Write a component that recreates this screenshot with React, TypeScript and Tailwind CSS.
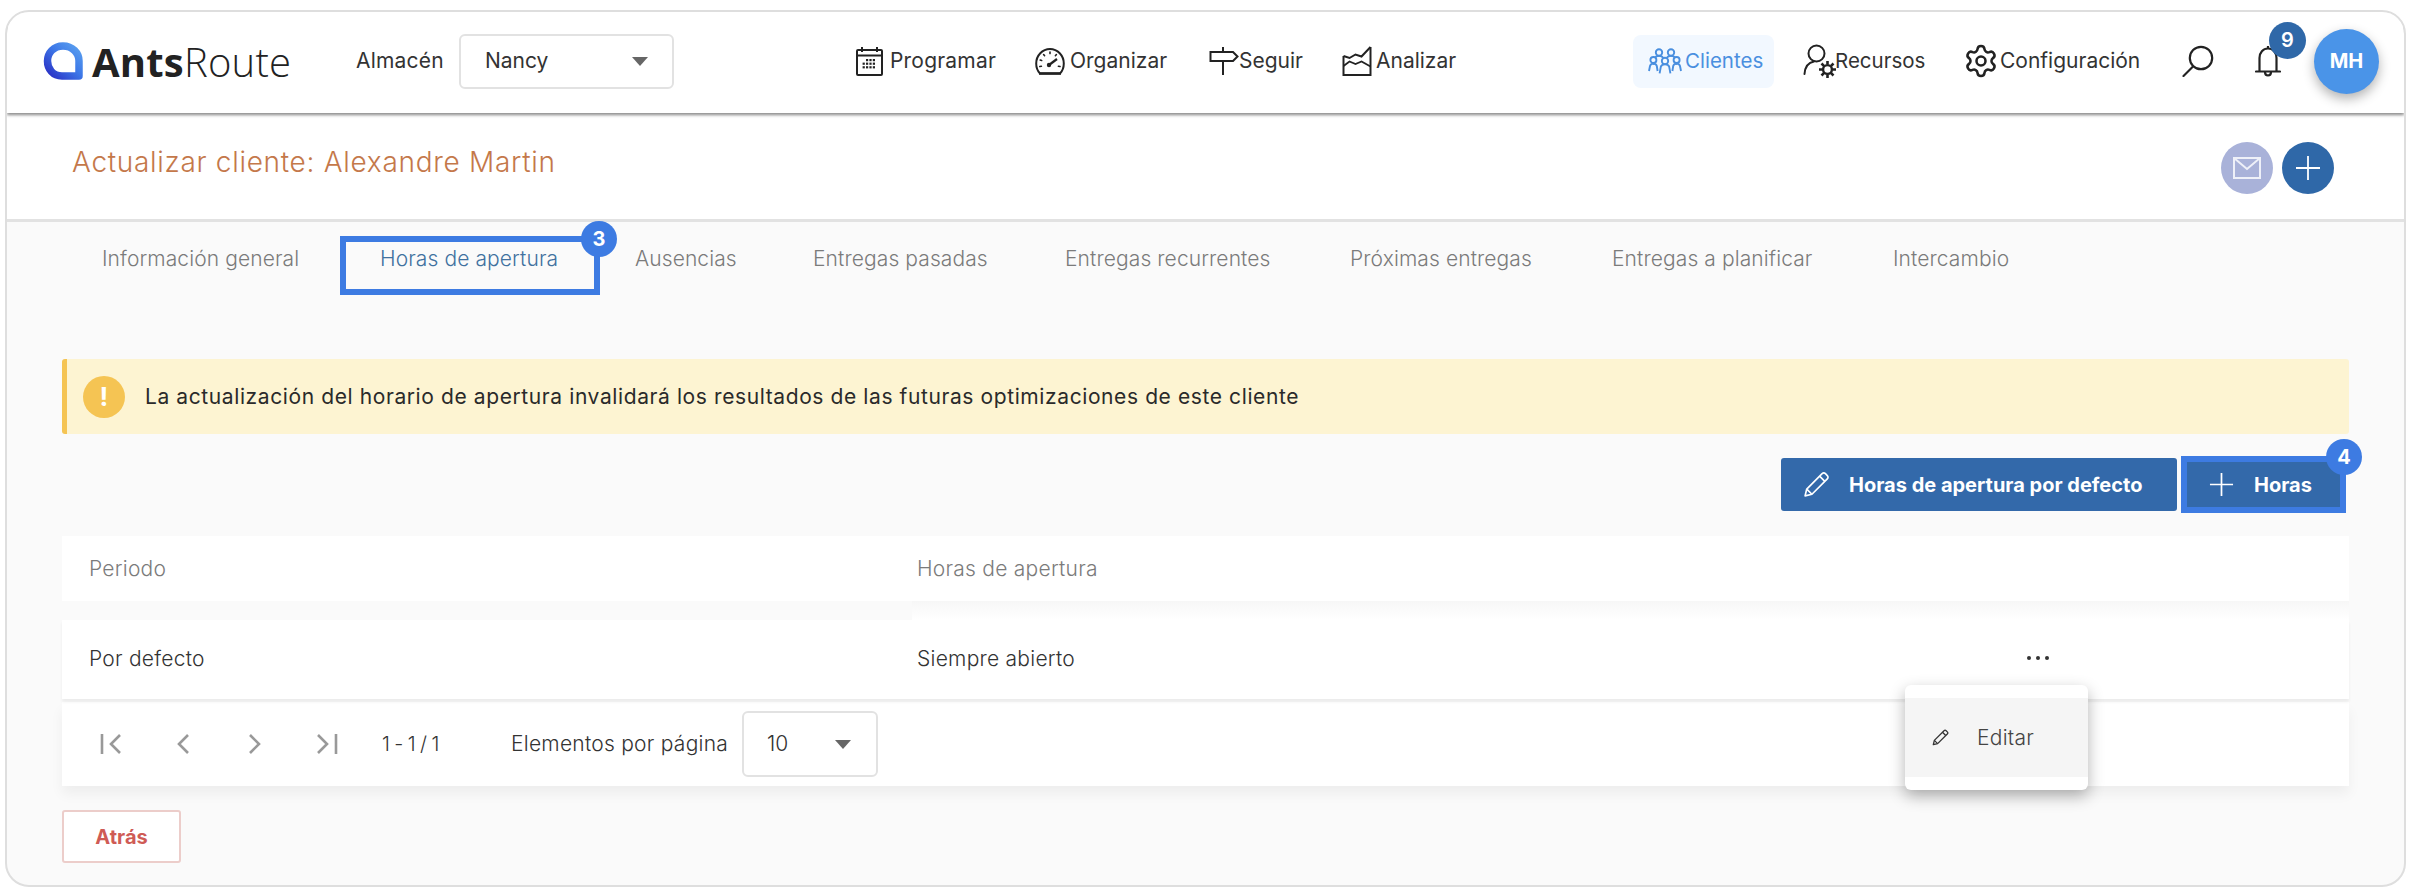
import React from "react";
import { Settings } from "lucide-react";

function IconCalendar() {
  const dots = [];
  for (let r = 0; r < 3; r++) for (let c = 0; c < 4; c++) {
    if (r === 0 && c === 0) continue;
    dots.push(<rect key={`${r}-${c}`} x={7.6 + c * 3.4} y={13 + r * 3.6} width="2.2" height="2.2" fill="#222" />);
  }
  return (
    <svg width="29" height="30" viewBox="0 0 29 30" fill="none" stroke="#222" strokeWidth="2">
      <rect x="2" y="4" width="25" height="25" rx="1" />
      <path d="M2 9.5h25" />
      <path d="M7 1v5M22 1v5" />
      <g stroke="none">{dots}</g>
    </svg>
  );
}
function IconGauge() {
  return (
    <svg width="30" height="28" viewBox="0 0 30 28" fill="none" stroke="#222" strokeWidth="2">
      <path d="M5 26.5C2.6 24 1.2 20.6 1.2 16.5 1.2 8.5 7.4 2 15 2s13.8 6.5 13.8 14.5c0 4.1-1.4 7.5-3.8 10z" />
      <path d="M4 26.5h22" strokeWidth="2.4" />
      <path d="M14 18l8-6" strokeWidth="2.2" />
      <circle cx="14" cy="18" r="2.2" fill="#222" stroke="none" />
      <g strokeWidth="1.6" strokeLinecap="round">
        <path d="M15 5v1.6M8.6 7.5l1 1.2M5.2 13l1.5.5M4.8 19.5l1.6-.3M21.4 7.5l-1 1.2M25 19.5l-1.6-.3" />
      </g>
    </svg>
  );
}
function IconSign() {
  return (
    <svg width="30" height="30" viewBox="0 0 30 30" fill="none" stroke="#222" strokeWidth="2">
      <path d="M1.5 6h22.5l4.5 4.5-4.5 4.5H1.5z" />
      <path d="M14 1v5M14 15v14" />
    </svg>
  );
}
function IconChart() {
  return (
    <svg width="30" height="30" viewBox="0 0 30 30" fill="none" stroke="#222" strokeWidth="2">
      <path d="M1.5 10v19h27V1" />
      <path d="M1.5 10l6 2 6-3.5 6 2 9-9.5" />
      <path d="M1.5 20l6-4.5 6 2.5 6-2.5 9 5" strokeWidth="1.8" />
    </svg>
  );
}
function IconPeople() {
  const c = "#4a8fdf";
  const person = (x: number, y: number) => (
    <g key={`${x}-${y}`}>
      <circle cx={x} cy={y} r="3.2" />
      <path d={`M${x - 5.4} ${y + 12.4}l1.2-6.6c.4-1.6 2-2.4 4.2-2.4s3.8.8 4.2 2.4l1.2 6.6`} />
    </g>
  );
  return (
    <svg width="34" height="26" viewBox="0 0 34 26" fill="none" stroke={c} strokeWidth="1.9" strokeLinejoin="round">
      {person(11, 4.5)}
      {person(23, 4.5)}
      <g>
        <circle cx="17" cy="13" r="3.2" fill="#f2f8ff" />
        <path d="M11.6 25.4l1.2-6.6c.4-1.6 2-2.4 4.2-2.4s3.8.8 4.2 2.4l1.2 6.6" fill="#f2f8ff" />
      </g>
      <circle cx="5.4" cy="12" r="3" fill="#f2f8ff" />
      <path d="M1 23l1-5c.4-1.6 1.6-2.4 3.4-2.4S8.4 16.4 8.8 18l.8 5" />
      <circle cx="28.6" cy="12" r="3" fill="#f2f8ff" />
      <path d="M33 23l-1-5c-.4-1.6-1.6-2.4-3.4-2.4S25.6 16.4 25.2 18l-.8 5" />
    </svg>
  );
}
function IconRecursos() {
  return (
    <svg width="34" height="35" viewBox="0 0 34 35" fill="none" stroke="#222" strokeWidth="2">
      <ellipse cx="13.5" cy="9.5" rx="8" ry="8" />
      <path d="M1.5 30C2 23 5.5 18.5 11 17.5" strokeLinecap="round" />
      <circle cx="24.5" cy="25.5" r="4.4" strokeWidth="2.4" />
      <path d="M24.5 17v3.5M24.5 30.5V34M16 25.5h3.5M29.5 25.5H33M18.5 19.5l2.4 2.4M28.1 29.1l2.4 2.4M18.5 31.5l2.4-2.4M28.1 21.9l2.4-2.4" strokeWidth="2.6" />
    </svg>
  );
}
function IconSearch() {
  return (
    <svg width="32" height="32" viewBox="0 0 32 32" fill="none" stroke="#222" strokeWidth="2.2" strokeLinecap="round">
      <circle cx="19" cy="13" r="11.2" />
      <path d="M11 21.5L1.5 31" />
    </svg>
  );
}
function IconBell() {
  return (
    <svg width="26" height="33" viewBox="0 0 26 33" fill="none" stroke="#222" strokeWidth="2.2">
      <path d="M4.5 26V13C4.5 7.5 8 3.5 13 3.5S21.5 7.5 21.5 13v13" />
      <path d="M1 26.5h24" strokeLinecap="round" />
      <path d="M10 27c0 2 1.2 3.5 3 3.5s3-1.5 3-3.5" />
      <path d="M13 1v3" />
    </svg>
  );
}
function IconPlus({ size = 26, sw = 1.8 }: { size?: number; sw?: number }) {
  return (
    <svg width={size} height={size} viewBox="0 0 26 26" stroke="#fff" strokeWidth={sw} fill="none">
      <path d="M13 1v24M1 13h24" />
    </svg>
  );
}
function IconPencil({ size, color, sw }: { size: number; color: string; sw: number }) {
  return (
    <svg width={size} height={size} viewBox="0 0 26 26" fill="none" stroke={color} strokeWidth={sw} strokeLinejoin="round">
      <path d="M2 24l1.6-6.6L18.4 2.6c.9-.9 2.3-.9 3.2 0l1.8 1.8c.9.9.9 2.3 0 3.2L8.6 22.4z" />
      <path d="M16 5l5 5M3.6 17.4l5 5" />
    </svg>
  );
}
function Caret() {
  return <span className="block w-0 h-0 border-l-[8px] border-r-[8px] border-t-[9px] border-l-transparent border-r-transparent border-t-[#666]" />;
}
function PageIcon({ d, w }: { d: string; w: number }) {
  return (
    <svg width={w} height="22" viewBox={`0 0 ${w} 22`} fill="none" stroke="#999" strokeWidth="2.6">
      <path d={d} />
    </svg>
  );
}
function NumBadge({ n, cls }: { n: string; cls: string }) {
  return (
    <span className={`absolute w-[36px] h-[36px] rounded-full bg-[#3d7be2] text-white flex items-center justify-center text-[20px] font-bold tracking-normal ${cls}`}>{n}</span>
  );
}
function NavItem({ icon, label, cls, tw }: { icon: React.ReactNode; label: string; cls: string; tw?: string }) {
  return (
    <div className={`flex items-center ${cls}`}>
      {icon}
      <span className={`text-[#333] ${tw ?? ""}`}>{label}</span>
    </div>
  );
}

const tabs = [
  ["Información general", "w-[199px]", "text-[#7b7b7b]"],
  ["Horas de apertura", "w-[176px]", "text-[#41719f]"],
  ["Ausencias", "w-[99px]", "text-[#7b7b7b]"],
  ["Entregas pasadas", "w-[173px]", "text-[#7b7b7b]"],
  ["Entregas recurrentes", "w-[206px]", "text-[#7b7b7b]"],
  ["Próximas entregas", "w-[183px]", "text-[#7b7b7b]"],
  ["Entregas a planificar", "w-[202px]", "text-[#7b7b7b]"],
  ["Intercambio", "w-[118px]", "text-[#7b7b7b]"],
];

export default function App() {
  return (
    <div className="w-[2410px] h-[894px] bg-white overflow-hidden pt-[10px] pl-[5px]">
      <div className="relative w-[2401px] h-[877px] rounded-[24px] border-2 border-[#dedede] bg-[#fafafa] overflow-hidden font-['Inter',sans-serif]">
        {/* top bar */}
        <header className="relative h-[101px] pb-[3px] bg-white flex items-center pl-[36px] shadow-[0_2px_3px_rgba(0,0,0,0.45)] z-10">
          <svg width="40" height="38" viewBox="0 0 40 38" fill="none">
            <defs>
              <linearGradient id="lg" x1="0" y1="1" x2="1" y2="0">
                <stop offset="0" stopColor="#2a2fc4" />
                <stop offset="0.55" stopColor="#3d78e8" />
                <stop offset="1" stopColor="#5aa0ef" />
              </linearGradient>
            </defs>
            <path d="M36 34H19C10 34 4.5 27 4.5 19S10.5 4 20 4s16 7 16 15z" stroke="url(#lg)" strokeWidth="7.5" strokeLinejoin="round" />
          </svg>
          <span className="ml-[9px] w-[199px] text-[40px] leading-none text-[#222] font-['Open_Sans',sans-serif] tracking-[0.2px] mb-[-2px]">
            <span className="font-bold">Ants</span><span className="font-light">Route</span>
          </span>
          <span className="ml-[65px] w-[89px] text-[21px] tracking-[0.2px] text-[#333]">Almacén</span>
          <div className="ml-[14px] w-[215px] h-[55px] border-2 border-[#e2e2e2] rounded-[6px] flex items-center justify-between pl-[24px] pr-[24px]">
            <span className="text-[21px] text-[#333]">Nancy</span>
            <Caret />
          </div>
          <NavItem cls="ml-[181px] gap-[6px]" tw="w-[105px] text-[21px] tracking-[0.2px]" icon={<IconCalendar />} label="Programar" />
          <NavItem cls="ml-[40px] gap-[5px]" tw="w-[98px] text-[21px]" icon={<IconGauge />} label="Organizar" />
          <NavItem cls="ml-[41px] gap-[0px]" tw="w-[63px] text-[21px]" icon={<IconSign />} label="Seguir" />
          <NavItem cls="ml-[40px] gap-[4px]" tw="w-[79px] text-[21px]" icon={<IconChart />} label="Analizar" />
          <div className="ml-[178px] w-[141px] h-[53px] rounded-[8px] bg-[#f2f8ff] flex items-center pl-[15px] gap-[3px]">
            <IconPeople />
            <span className="text-[20.5px] text-[#4a8fdf]">Clientes</span>
          </div>
          <NavItem cls="ml-[29px]" tw="w-[88px] ml-[-2px] text-[20.5px]" icon={<IconRecursos />} label="Recursos" />
          <NavItem cls="ml-[40px] gap-[1px]" tw="w-[138px] text-[21px]" icon={<Settings size={36} strokeWidth={1.7} color="#222" />} label="Configuración" />
          <div className="ml-[44px]"><IconSearch /></div>
          <div className="relative ml-[41px]">
            <IconBell />
            <span className="absolute left-[14px] top-[-23px] w-[37px] h-[37px] rounded-full bg-[#2f68a8] text-white text-[20px] font-semibold flex items-center justify-center">9</span>
          </div>
          <div className="ml-[33px] w-[65px] h-[65px] rounded-full bg-[#4a94e8] text-white text-[20px] font-bold flex items-center justify-center shadow-[0_5px_12px_rgba(0,0,0,0.3)]">MH</div>
        </header>

        {/* title */}
        <section className="h-[106px] mt-[3px] bg-white border-b-[3px] border-[#e2e2e2] flex items-center justify-between pl-[65px] pr-[70px]">
          <h1 className="text-[28px] font-light tracking-[0.7px] text-[#c4784a] mt-[-12px]">Actualizar cliente: Alexandre Martin</h1>
          <div className="flex items-center gap-[9px] mt-[1px]">
            <span className="w-[52px] h-[52px] rounded-full bg-[#a9b2d9] flex items-center justify-center">
              <svg width="28" height="22" viewBox="0 0 28 22" fill="none" stroke="#eef0f8" strokeWidth="2">
                <rect x="1" y="1" width="26" height="20" />
                <path d="M1 1l13 11L27 1" />
              </svg>
            </span>
            <span className="w-[52px] h-[52px] rounded-full bg-[#2f68a8] flex items-center justify-center"><IconPlus /></span>
          </div>
        </section>

        {/* tabs */}
        <nav className="h-[73px] flex items-center pl-[95px] gap-[79px] relative">
          {tabs.map(([t, w, c], i) => (
            <span key={i} className={`relative text-[21px] tracking-[0.1px] font-light whitespace-nowrap ${w} ${c}`}>
              {t}
              {i === 1 && (
                <>
                  <span className="absolute left-[-40px] top-[-7px] w-[260px] h-[59px] border-[6px] border-[#3d7be2]" />
                  <NumBadge n="3" cls="left-[201px] top-[-22px]" />
                </>
              )}
            </span>
          ))}
        </nav>

        {/* content */}
        <main className="px-[55px] pt-[64px]">
          <div className="h-[75px] bg-[#fdf4d2] border-l-[5px] border-[#f5c453] rounded-[3px] flex items-center pl-[16px]">
            <span className="w-[42px] h-[42px] rounded-full bg-[#f5c453] text-white text-[26px] font-bold flex items-center justify-center">!</span>
            <span className="ml-[20px] text-[21px] tracking-[0.6px] text-[#2a2a2a]">La actualización del horario de apertura invalidará los resultados de las futuras optimizaciones de este cliente</span>
          </div>

          <div className="mt-[22px] h-[57px] flex items-center justify-end gap-[4px] pr-[3px]">
            <button className="w-[396px] h-[53px] bg-[#3369aa] rounded-[3px] flex items-center pl-[22px] text-white text-[20px] font-bold">
              <IconPencil size={27} color="#fff" sw={1.6} />
              <span className="ml-[19px]">Horas de apertura por defecto</span>
            </button>
            <button className="relative w-[165px] h-[57px] bg-[#3369aa] border-[6px] border-[#3d7be2] flex items-center pl-[22px] text-white text-[20px] font-bold">
              <IconPlus size={25} sw={1.8} />
              <span className="ml-[20px]">Horas</span>
              <NumBadge n="4" cls="right-[-22px] top-[-23px]" />
            </button>
          </div>

          {/* table */}
          <div className="mt-[23px] relative">
            <div className="h-[65px] bg-white flex items-center text-[21px] tracking-[0.25px] font-light text-[#7b7b7b]">
              <span className="w-[855px] pl-[27px]">Periodo</span>
              <span>Horas de apertura</span>
            </div>
            <div className="h-[19px] flex">
              <div className="w-[850px]" />
              <div className="flex-1 bg-gradient-to-b from-[#f7f7f7] to-white" />
            </div>
            <div className="h-[79px] pb-[2px] bg-white flex items-center text-[21px] tracking-[0.25px] text-[#333] font-light shadow-[0_3px_3px_rgba(0,0,0,0.06)] relative">
              <span className="w-[855px] pl-[27px]">Por defecto</span>
              <span>Siempre abierto</span>
              <span className="absolute left-[1965px] top-[36px] flex gap-[5px]">
                <i className="block w-[4px] h-[4px] rounded-full bg-[#333]" />
                <i className="block w-[4px] h-[4px] rounded-full bg-[#333]" />
                <i className="block w-[4px] h-[4px] rounded-full bg-[#333]" />
              </span>
            </div>
            <div className="mt-[3px] h-[84px] bg-white flex items-center pl-[38px] shadow-[0_8px_12px_rgba(0,0,0,0.05)]">
              <PageIcon w={22} d="M2 1v20M20 2l-9 9 9 9" />
              <span className="ml-[53px]"><PageIcon w={15} d="M13 2l-9 9 9 9" /></span>
              <span className="ml-[58px]"><PageIcon w={15} d="M2 2l9 9-9 9" /></span>
              <span className="ml-[53px]"><PageIcon w={22} d="M2 2l9 9-9 9M20 1v20" /></span>
              <span className="ml-[44px] w-[58px] text-[20px] tracking-[-0.6px] text-[#333] font-light whitespace-nowrap">1 - 1 / 1</span>
              <span className="ml-[71px] text-[21px] tracking-[0.25px] text-[#333] font-light whitespace-nowrap w-[217px]">Elementos por página</span>
              <div className="ml-[14px] w-[136px] h-[66px] border-2 border-[#e2e2e2] rounded-[6px] flex items-center justify-between pl-[23px] pr-[25px]">
                <span className="text-[21px] text-[#333] font-light">10</span>
                <Caret />
              </div>
            </div>
            <div className="absolute left-[1843px] top-[149px] w-[183px] h-[105px] bg-white rounded-[6px] shadow-[0_6px_16px_rgba(0,0,0,0.3)] py-[13px]">
              <div className="h-[79px] bg-[#f5f5f5] flex items-center pl-[27px]">
                <IconPencil size={17} color="#333" sw={2} />
                <span className="ml-[28px] text-[21px] tracking-[0.25px] text-[#444] font-light">Editar</span>
              </div>
            </div>
          </div>

          <button className="mt-[24px] w-[119px] h-[53px] bg-white border-2 border-[#eccdca] rounded-[3px] text-[#cf5b55] text-[20px] font-bold">Atrás</button>
        </main>
      </div>
    </div>
  );
}
